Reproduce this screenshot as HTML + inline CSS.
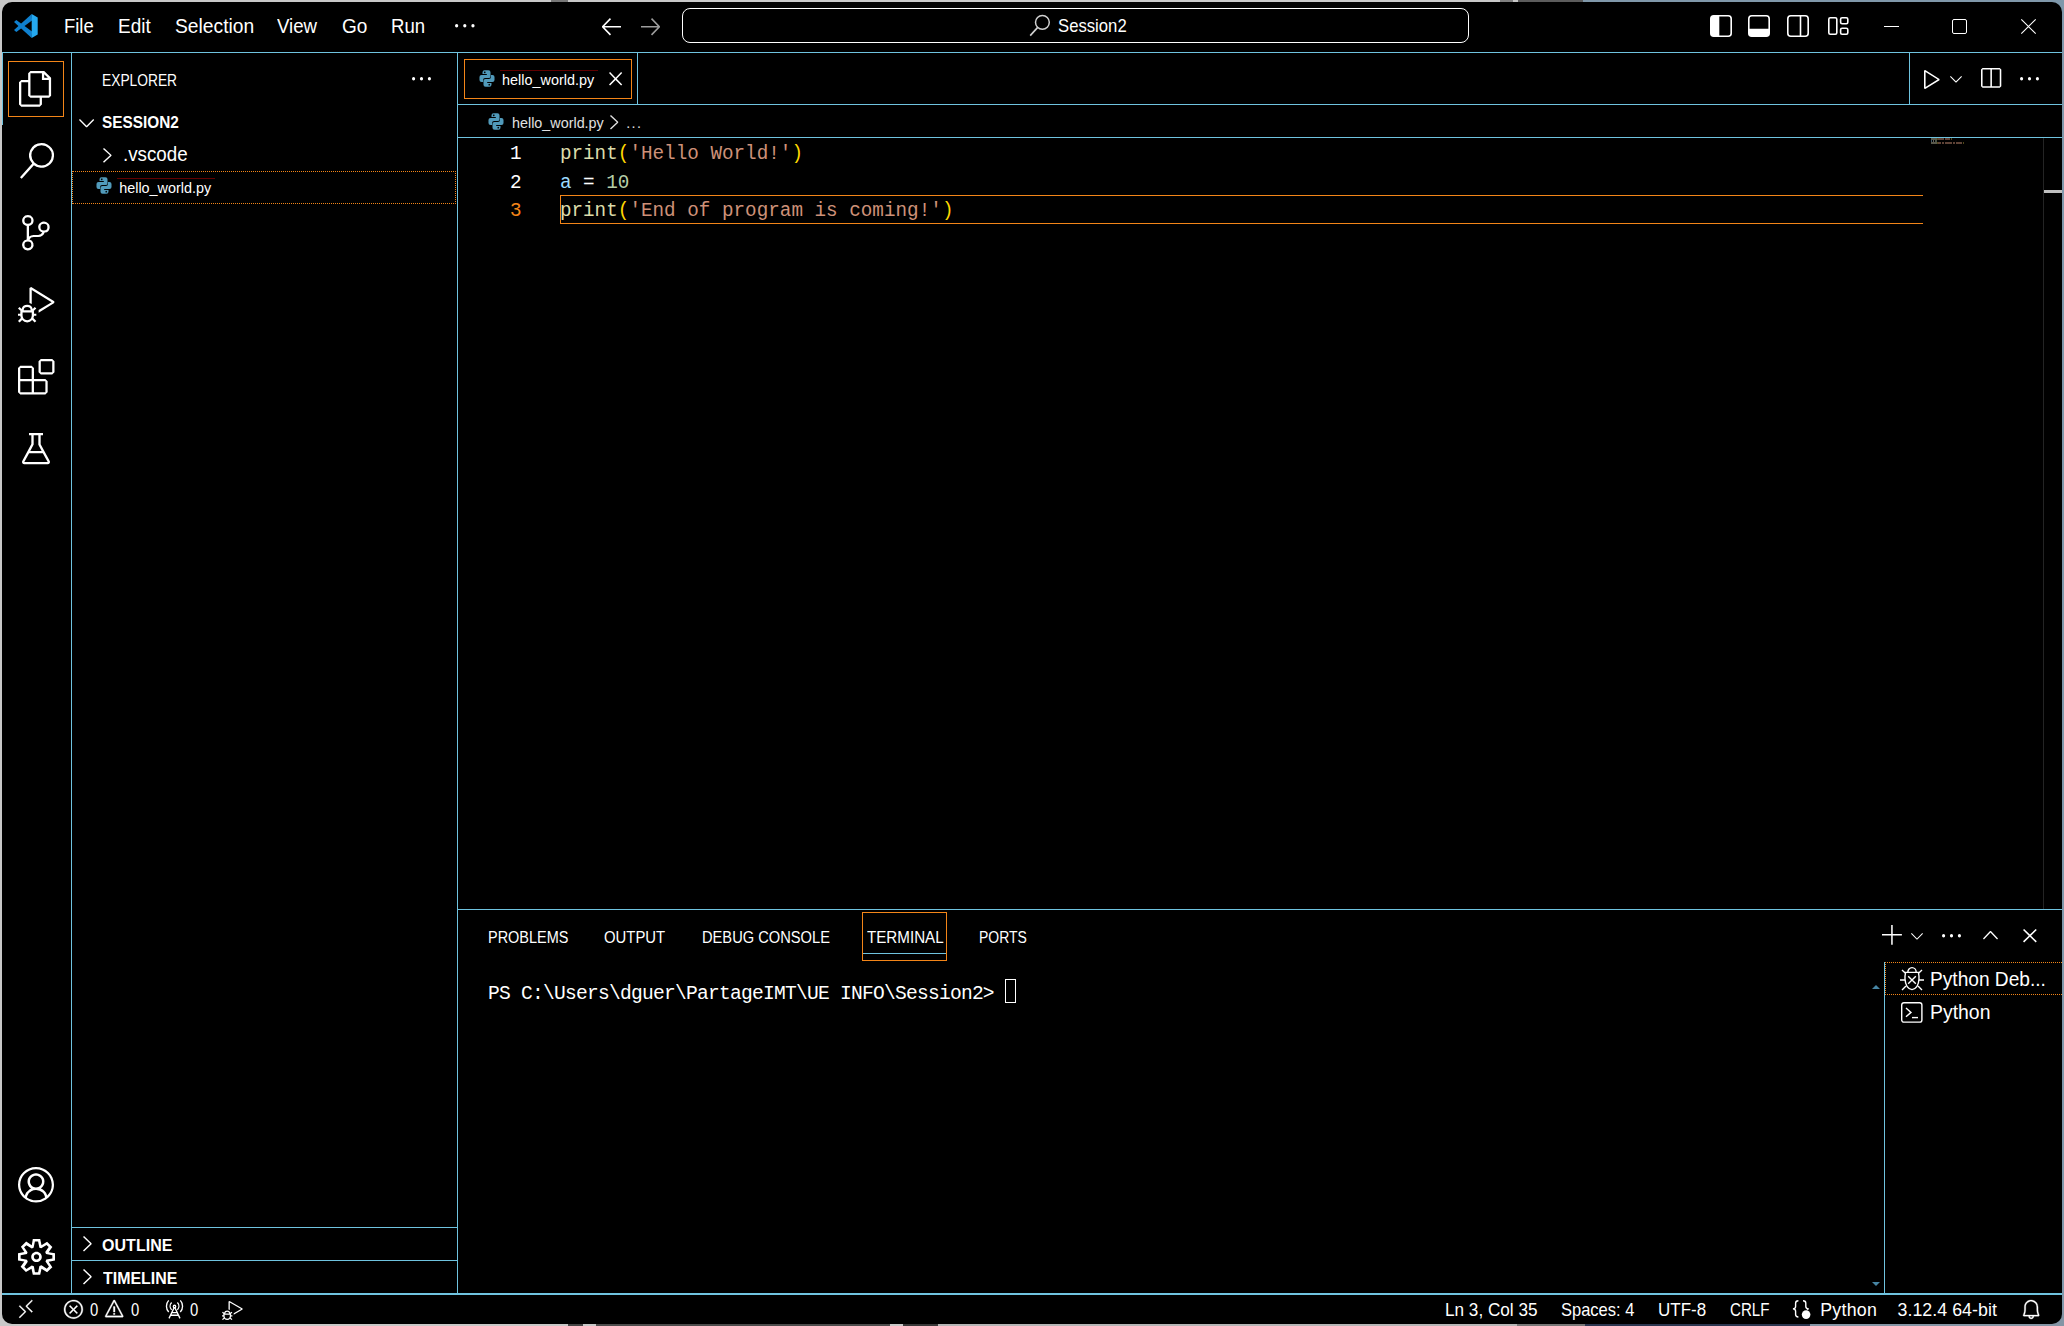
<!DOCTYPE html>
<html lang="en"><head><meta charset="utf-8"><title>hello_world.py - Session2 - Visual Studio Code</title>
<style>
html,body{margin:0;padding:0}
body{width:2064px;height:1326px;overflow:hidden;background:#c8c8c8;position:relative;font-family:"Liberation Sans",sans-serif;color:#fff}
#win{position:absolute;left:2px;top:2px;width:2060px;height:1321.5px;background:#000;border-radius:10px;overflow:hidden}
#root{position:absolute;left:0;top:0;width:2064px;height:1326px}
#root section{position:absolute;left:0;top:0;width:0;height:0}
#root div,#root svg,#root span,#desk div{position:absolute}
#root div{box-sizing:border-box}
.t{transform-origin:0 0;white-space:pre;height:40px;line-height:40px;font-family:"Liberation Sans",sans-serif;color:#fff}
.m{font-family:"Liberation Mono",monospace}
svg{overflow:visible;display:block}
</style></head>
<body>
<div id="desk">
<div style="left:1500px;top:0px;width:13px;height:14px;background:#808080"></div>
<div style="left:1518px;top:0px;width:65px;height:14px;background:#5c5c5c"></div>
<div style="left:1583px;top:0px;width:481px;height:14px;background:#8098aa"></div>
<div style="left:2050px;top:0px;width:14px;height:1326px;background:#7f98ab"></div>
<div style="left:551px;top:0px;width:17px;height:14px;background:#777"></div>
<div style="left:1517px;top:1310px;width:68px;height:16px;background:#777"></div>
<div style="left:1585px;top:1310px;width:225px;height:16px;background:#2b3650"></div>
<div style="left:568px;top:1310px;width:15px;height:16px;background:#444"></div>
<div style="left:596px;top:1310px;width:294px;height:16px;background:#4c4c4c"></div>
<div style="left:903px;top:1310px;width:35px;height:16px;background:#383838"></div>
<div style="left:938px;top:1310px;width:579px;height:16px;background:#b6b6b6"></div>
<div style="left:1810px;top:1310px;width:254px;height:16px;background:#8495a5"></div>
</div>
<div id="win"></div>
<div id="root">
<section id="titlebar">
<svg style="left:14px;top:14px" width="24" height="24" viewBox="0 0 24 24" ><path fill="#0f80cf" d="M17.7 0 L18 6.5 L2.3 18 L0 15.9 Z"/><path fill="#0f80cf" d="M17.7 24 L18 17.5 L2.3 6 L0 8.1 Z"/><path fill="#25a9f0" d="M17.7 0 L23.7 3.4 V20.6 L17.7 24 Z"/></svg>
<span class="t" style="left:64.39px;top:6px;font-size:19.6px;transform:scaleX(0.9415);">File</span>
<span class="t" style="left:117.54px;top:6px;font-size:19.6px;transform:scaleX(0.9681);">Edit</span>
<span class="t" style="left:174.63px;top:6px;font-size:19.6px;transform:scaleX(0.9826);">Selection</span>
<span class="t" style="left:277.32px;top:6px;font-size:19.6px;transform:scaleX(0.9518);">View</span>
<span class="t" style="left:341.74px;top:6px;font-size:19.6px;transform:scaleX(0.9697);">Go</span>
<span class="t" style="left:390.87px;top:6px;font-size:19.6px;transform:scaleX(0.9494);">Run</span>
<svg style="left:455px;top:24px" width="19.6" height="3.6" viewBox="2 7 12 2" preserveAspectRatio="none"><path fill="#fff" d="M4 8a1 1 0 1 1-2 0 1 1 0 0 1 2 0zm5 0a1 1 0 1 1-2 0 1 1 0 0 1 2 0zm5 0a1 1 0 1 1-2 0 1 1 0 0 1 2 0z"/></svg>
<svg style="left:602px;top:18px" width="19" height="17.5" viewBox="2 3.093 12 10.707" preserveAspectRatio="none"><path fill="#fff" d="M7 3.093l-5 5V8.800l5 5 .707-.707-4.146-4.147H14v-1H3.560L7.708 3.800 7 3.093z"/></svg>
<svg style="left:641px;top:18px" width="19" height="17.5" viewBox="2 3.18 12 10.707" preserveAspectRatio="none"><path fill="#9d9d9d" d="M9 13.887l5-5V8.180l-5-5-.707.707 4.146 4.147H2v1h10.440L8.292 13.180l.707.707z"/></svg>
<div style="left:682px;top:8px;width:787px;height:35px;border:1px solid #fff;border-radius:8px"></div>
<svg style="left:1029px;top:14px" width="22" height="23" viewBox="0 0 22 23" ><circle cx="13.4" cy="8.3" r="6.9" fill="none" stroke="#d0d0d0" stroke-width="1.5"/><path d="M8.7 13.4 L1.2 21.6" stroke="#d0d0d0" stroke-width="1.6" fill="none"/></svg>
<span class="t" style="left:1058.04px;top:6px;font-size:18.6px;transform:scaleX(0.8978);">Session2</span>
<svg style="left:1709.5px;top:15px" width="22" height="22" viewBox="0 0 22 22" ><rect x="0.8" y="0.8" width="20.4" height="20.4" rx="3" fill="none" stroke="#fff" stroke-width="1.6"/><path d="M0.8 3.8 a3 3 0 0 1 3-3 H9.3 V21.2 H3.8 a3 3 0 0 1 -3-3 Z" fill="#fff"/></svg>
<svg style="left:1748.4px;top:15px" width="22" height="22" viewBox="0 0 22 22" ><rect x="0.8" y="0.8" width="20.4" height="20.4" rx="3" fill="none" stroke="#fff" stroke-width="1.6"/><path d="M0.8 13.8 H21.2 V18.2 a3 3 0 0 1 -3 3 H3.8 a3 3 0 0 1 -3-3 Z" fill="#fff"/></svg>
<svg style="left:1787.4px;top:15px" width="22" height="22" viewBox="0 0 22 22" ><rect x="0.8" y="0.8" width="20.4" height="20.4" rx="3" fill="none" stroke="#fff" stroke-width="1.6"/><path d="M13.5 0.8 V21.2" stroke="#fff" stroke-width="1.6" fill="none"/></svg>
<svg style="left:1828px;top:17px" width="21" height="18" viewBox="0 0 21 18" ><g fill="none" stroke="#fff" stroke-width="1.6"><rect x="0.8" y="0.8" width="8" height="16.4" rx="1.5"/><rect x="12.6" y="0.8" width="7.2" height="6" rx="1.5"/><rect x="12.6" y="11.2" width="7.2" height="6" rx="1.5"/></g></svg>
<div style="left:1884px;top:26px;width:15px;height:1px;background:#fff"></div>
<div style="left:1952px;top:19px;width:15px;height:15px;border:1px solid #fff;border-radius:2px"></div>
<svg style="left:2021px;top:19px" width="15" height="15" viewBox="0 0 15 15" ><path d="M0.3 0.3 L14.7 14.7 M14.7 0.3 L0.3 14.7" stroke="#fff" stroke-width="1.1" fill="none"/></svg>
<div style="left:2px;top:52px;width:2060px;height:1px;background:#6fc3df"></div>
</section>
<section id="activitybar">
<div style="left:71px;top:53px;width:1px;height:1240px;background:#6fc3df"></div>
<div style="left:2px;top:52px;width:1px;height:73px;background:#6fc3df"></div>
<div style="left:8px;top:61px;width:56px;height:56px;border:1px solid #f38518"></div>
<svg style="left:19.2px;top:70.9px" width="32.1" height="35.7" viewBox="1 0 21 24" preserveAspectRatio="none"><path fill="#fff" d="M17.5 0h-9L7 1.5V6H2.5L1 7.5v15.07L2.5 24h12.07L16 22.57V18h4.7l1.3-1.43V4.5L17.5 0zm0 2.12l2.38 2.38H17.5V2.12zm-3 20.38h-12v-15H7v9.07L8.5 18h6v4.5zm6-6h-12v-15H16V6h4.500v10.5z"/></svg>
<svg style="left:19.5px;top:143px" width="34.1" height="35.8" viewBox="1 -1.02565e-06 22.5045 23.88" preserveAspectRatio="none"><path fill="#fff" d="M15.25 0a8.25 8.25 0 0 0-6.18 13.72L1 22.88l1.12 1 8.05-9.12A8.251 8.251 0 1 0 15.25.01V0zm0 15a6.75 6.75 0 1 1 0-13.5 6.75 6.75 0 0 1 0 13.5z"/></svg>
<svg style="left:22px;top:215px" width="27.7" height="35.5" viewBox="2.9925 0.001422 18.0145 24.0005" preserveAspectRatio="none"><path fill="#fff" d="M21.007 8.222A3.738 3.738 0 0 0 15.045 5.2a3.737 3.737 0 0 0 1.156 6.583 2.988 2.988 0 0 1-2.668 1.67h-2.99a4.456 4.456 0 0 0-2.989 1.165V7.4a3.737 3.737 0 1 0-1.494 0v9.117a3.776 3.776 0 1 0 1.816.099 2.990 2.990 0 0 1 2.668-1.667h2.990a4.484 4.484 0 0 0 4.223-3.039 3.736 3.736 0 0 0 3.250-3.687zM4.565 3.738a2.242 2.242 0 1 1 4.484 0 2.242 2.242 0 0 1-4.484 0zm4.484 16.441a2.242 2.242 0 1 1-4.484 0 2.242 2.242 0 0 1 4.484 0zm8.221-9.715a2.242 2.242 0 1 1 0-4.485 2.242 2.242 0 0 1 0 4.485z"/></svg>
<svg style="left:17.5px;top:287px" width="36.3" height="35.5" viewBox="0 0 23.76 24" preserveAspectRatio="none"><path fill="#fff" d="M10.94 13.5l-1.32 1.32a3.730 3.730 0 0 0-7.240 0L1.060 13.5 0 14.560l1.720 1.720-.220.220V18H0v1.500h1.500v.080c.077.489.214.966.410 1.420L0 22.940 1.060 24l1.650-1.650A4.308 4.308 0 0 0 6 24a4.310 4.310 0 0 0 3.290-1.650L10.940 24 12 22.940 10.090 21c.198-.464.336-.951.410-1.450v-.100H12V18h-1.500v-1.500l-.220-.220L12 14.560l-1.060-1.060zM6 13.500a2.250 2.250 0 0 1 2.250 2.250h-4.500A2.250 2.250 0 0 1 6 13.500zm3 6a3.330 3.330 0 0 1-3 3 3.330 3.330 0 0 1-3-3v-2.250h6v2.250zm14.760-9.900v1.260L13.500 17.370V15.600l8.500-5.370L9 2v9.460a5.070 5.070 0 0 0-1.500-.720V.630L8.640 0l15.120 9.600z"/></svg>
<svg style="left:17.5px;top:359px" width="36.5" height="35.5" viewBox="0 0 24 24" preserveAspectRatio="none"><path fill="#fff" d="M13.5 1.5L15 0h7.500L24 1.500V9l-1.500 1.500H15L13.500 9V1.500zm1.500 0V9h7.500V1.500H15zM0 15V6l1.500-1.500H9L10.500 6v7.500H18l1.500 1.500v7.500L18 24H1.500L0 22.500V15zm9-1.500V6H1.500v7.500H9zM9 15H1.500v7.500H9V15zm1.500 7.500H18V15h-7.500v7.500z"/></svg>
<svg style="left:22px;top:433.2px" width="28" height="31.3" viewBox="2.00153 1 11.9974 14.006" preserveAspectRatio="none"><path fill="#fff" d="M13.893 13.558L10 6.006v-4h1v-1H9.994V1l-.456.005H5V2h1v3.952l-3.894 7.609A1 1 0 0 0 3 15.006h10a1 1 0 0 0 .893-1.448zm-7-7.150L7 6.193V2.036l2-.024v4.237l.110.215 1.312 2.544H5.549l1.344-2.600zM3 14.017l2.039-3.994h5.900L13 14.006l-10 .011z"/></svg>
<svg style="left:18px;top:1167px" width="36" height="35.5" viewBox="0 0 16 16" preserveAspectRatio="none"><path fill="#fff" d="M16 7.992C16 3.580 12.416 0 8 0S0 3.580 0 7.992c0 2.430 1.104 4.620 2.832 6.090.016.016.032.016.032.032.144.112.288.224.448.336.080.048.144.111.224.175A7.980 7.980 0 0 0 8.016 16a7.980 7.980 0 0 0 4.480-1.375c.080-.048.144-.111.224-.160.144-.111.304-.223.448-.335.016-.016.032-.016.032-.032 1.696-1.487 2.800-3.676 2.800-6.106zm-8 7.001c-1.504 0-2.880-.480-4.016-1.279.016-.128.048-.255.080-.383a4.170 4.170 0 0 1 .416-.991c.176-.304.384-.576.640-.816.240-.240.528-.463.816-.639.304-.176.624-.304.976-.400A4.150 4.150 0 0 1 8 10.342a4.185 4.185 0 0 1 2.928 1.166c.368.368.656.800.864 1.295.112.288.192.592.240.911A7.030 7.030 0 0 1 8 14.993zm-2.448-7.400a2.490 2.490 0 0 1-.208-1.024c0-.351.064-.703.208-1.023.144-.320.336-.607.576-.847.240-.240.528-.431.848-.575.320-.144.672-.208 1.024-.208.368 0 .704.064 1.024.208.320.144.608.336.848.575.240.240.432.528.576.847.144.320.208.672.208 1.023 0 .368-.064.704-.208 1.023a2.840 2.840 0 0 1-.576.848 2.840 2.840 0 0 1-.848.575 2.715 2.715 0 0 1-2.064 0 2.840 2.840 0 0 1-.848-.575 2.526 2.526 0 0 1-.560-.848zm7.424 5.306c0-.032-.016-.048-.016-.080a5.220 5.220 0 0 0-.688-1.406 4.883 4.883 0 0 0-1.088-1.135 5.207 5.207 0 0 0-1.040-.608 2.820 2.820 0 0 0 .464-.383 4.200 4.200 0 0 0 .624-.784 3.624 3.624 0 0 0 .528-1.934 3.710 3.710 0 0 0-.288-1.470 3.799 3.799 0 0 0-.816-1.199 3.845 3.845 0 0 0-1.200-.800 3.720 3.720 0 0 0-1.472-.287 3.720 3.720 0 0 0-1.472.288 3.631 3.631 0 0 0-1.200.815 3.840 3.840 0 0 0-.800 1.199 3.710 3.710 0 0 0-.288 1.470c0 .352.048.688.144 1.007.096.336.224.640.400.927.160.288.384.544.624.784.144.144.304.271.480.383a5.120 5.120 0 0 0-1.040.624c-.416.320-.784.703-1.088 1.119a4.999 4.999 0 0 0-.688 1.406c-.016.032-.016.064-.016.080C1.776 11.636.992 9.910.992 7.992.992 4.140 4.144.991 8 .991s7.008 3.149 7.008 7.001a6.960 6.960 0 0 1-2.032 4.907z"/></svg>
<svg style="left:17.5px;top:1238.7px" width="37" height="35.8" viewBox="1 1 14 14" preserveAspectRatio="none"><path fill="#fff" fill-rule="evenodd" d="M9.100 4.400L8.600 2H7.400l-.500 2.400-.700.300-2-1.300-.900.800 1.300 2-.200.700-2.400.500v1.200l2.400.500.300.800-1.300 2 .800.800 2-1.300.800.300.400 2.300h1.200l.500-2.400.800-.300 2 1.300.800-.800-1.300-2 .300-.800 2.300-.400V7.400l-2.400-.500-.300-.800 1.300-2-.800-.800-2 1.300-.700-.200zM9.400 1l.500 2.400L12 2.100l2 2-1.400 2.100 2.400.400v2.800l-2.400.500L14 12l-2 2-2.100-1.400-.500 2.400H6.600l-.500-2.400L4 13.900l-2-2 1.400-2.100L1 9.400V6.600l2.400-.500L2.100 4l2-2 2.100 1.400.400-2.400h2.800zm.600 7c0 1.100-.900 2-2 2s-2-.900-2-2 .900-2 2-2 2 .900 2 2zM8 9c.600 0 1-.400 1-1s-.400-1-1-1-1 .400-1 1 .400 1 1 1z"/></svg>
</section>
<section id="sidebar">
<div style="left:457px;top:53px;width:1px;height:1240px;background:#6fc3df"></div>
<span class="t" style="left:102.37px;top:61px;font-size:15.8px;transform:scaleX(0.8724);">EXPLORER</span>
<svg style="left:412px;top:77.2px" width="19" height="3.6" viewBox="2 7 12 2" preserveAspectRatio="none"><path fill="#fff" d="M4 8a1 1 0 1 1-2 0 1 1 0 0 1 2 0zm5 0a1 1 0 1 1-2 0 1 1 0 0 1 2 0zm5 0a1 1 0 1 1-2 0 1 1 0 0 1 2 0z"/></svg>
<svg style="left:79.4px;top:118.8px" width="15.2" height="8.2" viewBox="3 5.715 9.953 5.285" preserveAspectRatio="none"><path fill="#fff" d="M7.976 10.072l4.357-4.357.62.618L8.284 11h-.618L3 6.333l.619-.618 4.357 4.357z"/></svg>
<span class="t" style="left:102.26px;top:103px;font-size:16px;transform:scaleX(0.9591);font-weight:700;">SESSION2</span>
<svg style="left:103.1px;top:147.9px" width="8.5" height="14.7" viewBox="5.715 3.047 5.285 9.953" preserveAspectRatio="none"><path fill="#fff" d="M10.072 8.024L5.715 3.667l.618-.62L11 7.716v.618L6.333 13l-.618-.619 4.357-4.357z"/></svg>
<span class="t" style="left:122.79px;top:134px;font-size:19.6px;transform:scaleX(0.9571);">.vscode</span>
<div style="left:72px;top:171px;width:384px;height:33px;border:1px dotted #f38518"></div>
<svg style="left:96.4px;top:177px" width="16" height="17" viewBox="0 0 16.4 17.2" preserveAspectRatio="none"><g fill="#519aba" fill-rule="evenodd"><path d="M3.6 4.05 V2.3 Q3.6 0.2 5.7 0.2 H9.7 Q11.8 0.2 11.8 2.3 V6.2 Q11.8 8.2 9.8 8.2 H6.2 Q4.2 8.2 4.2 10.2 V12.1 H2.6 Q0.5 12.1 0.5 10 V7.1 Q0.5 5 2.6 5 H8 V4.05 Z M5.9 1.5 a0.85 0.85 0 1 0 0.001 0 Z"/><path transform="rotate(180 8.2 8.6)" d="M3.6 4.05 V2.3 Q3.6 0.2 5.7 0.2 H9.7 Q11.8 0.2 11.8 2.3 V6.2 Q11.8 8.2 9.8 8.2 H6.2 Q4.2 8.2 4.2 10.2 V12.1 H2.6 Q0.5 12.1 0.5 10 V7.1 Q0.5 5 2.6 5 H8 V4.05 Z M5.9 1.5 a0.85 0.85 0 1 0 0.001 0 Z"/></g></svg>
<div style="left:117px;top:178px;width:98px;height:1px;background:#600000"></div>
<span class="t" style="left:119.20px;top:168px;font-size:14.4px;">hello_world.py</span>
<div style="left:72px;top:1227px;width:385px;height:1px;background:#6fc3df"></div>
<svg style="left:83px;top:1236.2px" width="8.6" height="15.6" viewBox="5.715 3.047 5.285 9.953" preserveAspectRatio="none"><path fill="#fff" d="M10.072 8.024L5.715 3.667l.618-.62L11 7.716v.618L6.333 13l-.618-.619 4.357-4.357z"/></svg>
<span class="t" style="left:102.04px;top:1226px;font-size:16px;letter-spacing:0.027px;font-weight:700;">OUTLINE</span>
<div style="left:72px;top:1260px;width:385px;height:1px;background:#6fc3df"></div>
<svg style="left:83px;top:1269.3px" width="8.6" height="15.5" viewBox="5.715 3.047 5.285 9.953" preserveAspectRatio="none"><path fill="#fff" d="M10.072 8.024L5.715 3.667l.618-.62L11 7.716v.618L6.333 13l-.618-.619 4.357-4.357z"/></svg>
<span class="t" style="left:103.02px;top:1259px;font-size:16px;transform:scaleX(0.9965);font-weight:700;">TIMELINE</span>
</section>
<section id="tabs">
<div style="left:464px;top:59px;width:168px;height:40px;border:1px solid #f38518"></div>
<svg style="left:478.8px;top:70px" width="16" height="17" viewBox="0 0 16.4 17.2" preserveAspectRatio="none"><g fill="#519aba" fill-rule="evenodd"><path d="M3.6 4.05 V2.3 Q3.6 0.2 5.7 0.2 H9.7 Q11.8 0.2 11.8 2.3 V6.2 Q11.8 8.2 9.8 8.2 H6.2 Q4.2 8.2 4.2 10.2 V12.1 H2.6 Q0.5 12.1 0.5 10 V7.1 Q0.5 5 2.6 5 H8 V4.05 Z M5.9 1.5 a0.85 0.85 0 1 0 0.001 0 Z"/><path transform="rotate(180 8.2 8.6)" d="M3.6 4.05 V2.3 Q3.6 0.2 5.7 0.2 H9.7 Q11.8 0.2 11.8 2.3 V6.2 Q11.8 8.2 9.8 8.2 H6.2 Q4.2 8.2 4.2 10.2 V12.1 H2.6 Q0.5 12.1 0.5 10 V7.1 Q0.5 5 2.6 5 H8 V4.05 Z M5.9 1.5 a0.85 0.85 0 1 0 0.001 0 Z"/></g></svg>
<div style="left:500px;top:70px;width:98px;height:1px;background:#600000"></div>
<span class="t" style="left:502.00px;top:60px;font-size:14.4px;letter-spacing:0.013px;">hello_world.py</span>
<svg style="left:609.2px;top:72.2px" width="13.2" height="13.6" viewBox="3.647 3.646 8.707 8.708" preserveAspectRatio="none"><path fill="#fff" d="M8 8.707l3.646 3.647.708-.707L8.707 8l3.647-3.646-.707-.708L8 7.293 4.354 3.646l-.707.708L7.293 8l-3.646 3.646.707.708L8 8.707z"/></svg>
<div style="left:637px;top:53px;width:1px;height:51px;background:#6fc3df"></div>
<div style="left:458px;top:104px;width:1604px;height:1px;background:#6fc3df"></div>
<div style="left:1909px;top:53px;width:1px;height:51px;background:#6fc3df"></div>
<svg style="left:1924.2px;top:69.9px" width="15.5" height="19.1" viewBox="3 2 9.78 12.83" preserveAspectRatio="none"><path fill="#fff" d="M3.780 2L3 2.410v12l.780.420 9-6V8l-9-6zM4 13.480V3.350l7.600 5.070L4 13.480z"/></svg>
<svg style="left:1950px;top:76.2px" width="12" height="6.4" viewBox="3 5.715 9.953 5.285" preserveAspectRatio="none"><path fill="#fff" d="M7.976 10.072l4.357-4.357.62.618L8.284 11h-.618L3 6.333l.619-.618 4.357 4.357z"/></svg>
<svg style="left:1981px;top:68.3px" width="20.3" height="19.7" viewBox="2 1 13 13" preserveAspectRatio="none"><path fill="#fff" d="M14 1H3L2 2v11l1 1h11l1-1V2l-1-1zM8 13H3V2h5v11zm6 0H9V2h5v11z"/></svg>
<svg style="left:2020px;top:77.2px" width="19" height="3.6" viewBox="2 7 12 2" preserveAspectRatio="none"><path fill="#fff" d="M4 8a1 1 0 1 1-2 0 1 1 0 0 1 2 0zm5 0a1 1 0 1 1-2 0 1 1 0 0 1 2 0zm5 0a1 1 0 1 1-2 0 1 1 0 0 1 2 0z"/></svg>
<svg style="left:488px;top:113px" width="16" height="17" viewBox="0 0 16.4 17.2" preserveAspectRatio="none"><g fill="#519aba" fill-rule="evenodd"><path d="M3.6 4.05 V2.3 Q3.6 0.2 5.7 0.2 H9.7 Q11.8 0.2 11.8 2.3 V6.2 Q11.8 8.2 9.8 8.2 H6.2 Q4.2 8.2 4.2 10.2 V12.1 H2.6 Q0.5 12.1 0.5 10 V7.1 Q0.5 5 2.6 5 H8 V4.05 Z M5.9 1.5 a0.85 0.85 0 1 0 0.001 0 Z"/><path transform="rotate(180 8.2 8.6)" d="M3.6 4.05 V2.3 Q3.6 0.2 5.7 0.2 H9.7 Q11.8 0.2 11.8 2.3 V6.2 Q11.8 8.2 9.8 8.2 H6.2 Q4.2 8.2 4.2 10.2 V12.1 H2.6 Q0.5 12.1 0.5 10 V7.1 Q0.5 5 2.6 5 H8 V4.05 Z M5.9 1.5 a0.85 0.85 0 1 0 0.001 0 Z"/></g></svg>
<span class="t" style="left:512.10px;top:103px;font-size:14.4px;transform:scaleX(0.9975);color:#e0e0e0;">hello_world.py</span>
<svg style="left:610.4px;top:114.6px" width="8.2" height="14.4" viewBox="5.715 3.047 5.285 9.953" preserveAspectRatio="none"><path fill="#e0e0e0" d="M10.072 8.024L5.715 3.667l.618-.62L11 7.716v.618L6.333 13l-.618-.619 4.357-4.357z"/></svg>
<span class="t" style="left:626.19px;top:103px;font-size:14.4px;letter-spacing:1.364px;color:#e0e0e0;">...</span>
<div style="left:458px;top:137px;width:1604px;height:1px;background:#6fc3df"></div>
</section>
<section id="editor">
<span class="t m" style="left:509.91px;top:134px;font-size:19.3px;">1</span>
<span class="t m" style="left:509.94px;top:163px;font-size:19.3px;">2</span>
<span class="t m" style="left:510.09px;top:191px;font-size:19.3px;color:#f38518;">3</span>
<span class="t m" style="left:559.91px;top:134px;font-size:19.3px;color:#dcdcaa;">print</span><span class="t m" style="left:617.82px;top:134px;font-size:19.3px;color:#ffd700;">(</span><span class="t m" style="left:629.40px;top:134px;font-size:19.3px;color:#ce9178;">'Hello World!'</span><span class="t m" style="left:791.55px;top:134px;font-size:19.3px;color:#ffd700;">)</span>
<span class="t m" style="left:559.91px;top:163px;font-size:19.3px;color:#9cdcfe;">a</span><span class="t m" style="left:571.50px;top:163px;font-size:19.3px;"> = </span><span class="t m" style="left:606.24px;top:163px;font-size:19.3px;color:#b5cea8;">10</span>
<div style="left:560px;top:195px;width:1363px;height:29px;border:1px solid #f38518;border-right:none"></div>
<span class="t m" style="left:559.91px;top:191px;font-size:19.3px;color:#dcdcaa;">print</span><span class="t m" style="left:617.82px;top:191px;font-size:19.3px;color:#ffd700;">(</span><span class="t m" style="left:629.40px;top:191px;font-size:19.3px;color:#ce9178;">'End of program is coming!'</span><span class="t m" style="left:942.12px;top:191px;font-size:19.3px;color:#ffd700;">)</span>
<div style="left:1931px;top:138px;width:6px;height:2px;background:#58584a"></div><div style="left:1937px;top:138px;width:1px;height:2px;background:#504818"></div><div style="left:1938px;top:138px;width:6px;height:2px;background:#5e4236"></div><div style="left:1945px;top:138px;width:5px;height:2px;background:#5e4236"></div><div style="left:1951px;top:138px;width:1px;height:2px;background:#504818"></div>
<div style="left:1931px;top:140px;width:1px;height:2px;background:#3e5868"></div><div style="left:1933px;top:140px;width:1px;height:2px;background:#606060"></div><div style="left:1935px;top:140px;width:2px;height:2px;background:#485244"></div>
<div style="left:1931px;top:142px;width:6px;height:2px;background:#58584a"></div><div style="left:1937px;top:142px;width:1px;height:2px;background:#504818"></div><div style="left:1938px;top:142px;width:3px;height:2px;background:#5e4236"></div><div style="left:1942px;top:142px;width:2px;height:2px;background:#5e4236"></div><div style="left:1945px;top:142px;width:7px;height:2px;background:#5e4236"></div><div style="left:1953px;top:142px;width:2px;height:2px;background:#5e4236"></div><div style="left:1956px;top:142px;width:6px;height:2px;background:#5e4236"></div><div style="left:1963px;top:142px;width:1px;height:2px;background:#504818"></div>
<div style="left:2043px;top:138px;width:1px;height:771px;background:#242424"></div>
<div style="left:2044px;top:190px;width:18px;height:3px;background:#c0c0c0"></div>
</section>
<section id="panel">
<div style="left:458px;top:909px;width:1604px;height:1px;background:#6fc3df"></div>
<span class="t" style="left:487.81px;top:918px;font-size:15.8px;transform:scaleX(0.9163);">PROBLEMS</span>
<span class="t" style="left:604.30px;top:918px;font-size:15.8px;transform:scaleX(0.9414);">OUTPUT</span>
<span class="t" style="left:702.20px;top:918px;font-size:15.8px;transform:scaleX(0.9281);">DEBUG CONSOLE</span>
<div style="left:862px;top:912px;width:85px;height:49px;border:1px solid #f38518"></div>
<span class="t" style="left:867.16px;top:918px;font-size:15.8px;transform:scaleX(0.9594);">TERMINAL</span>
<div style="left:863px;top:953px;width:83px;height:1px;background:#6fc3df"></div>
<span class="t" style="left:978.75px;top:918px;font-size:15.8px;transform:scaleX(0.8835);">PORTS</span>
<svg style="left:1881.9px;top:925px" width="19.9" height="19.7" viewBox="1 1 13 13" preserveAspectRatio="none"><path fill="#fff" d="M14 7v1H8v6H7V8H1V7h6V1h1v6h6z"/></svg>
<svg style="left:1911px;top:933px" width="12" height="6.6" viewBox="3 5.715 9.953 5.285" preserveAspectRatio="none"><path fill="#fff" d="M7.976 10.072l4.357-4.357.62.618L8.284 11h-.618L3 6.333l.619-.618 4.357 4.357z"/></svg>
<svg style="left:1942px;top:934.2px" width="19" height="3.6" viewBox="2 7 12 2" preserveAspectRatio="none"><path fill="#fff" d="M4 8a1 1 0 1 1-2 0 1 1 0 0 1 2 0zm5 0a1 1 0 1 1-2 0 1 1 0 0 1 2 0zm5 0a1 1 0 1 1-2 0 1 1 0 0 1 2 0z"/></svg>
<svg style="left:1983px;top:931.2px" width="15" height="8.6" viewBox="3.047 5 9.953 5.285" preserveAspectRatio="none"><path fill="#fff" d="M8.024 5.928l-4.357 4.357-.62-.618L7.716 5h.618L13 9.667l-.619.618-4.357-4.357z"/></svg>
<svg style="left:2022.7px;top:929.2px" width="13.8" height="13.4" viewBox="3.647 3.646 8.707 8.708" preserveAspectRatio="none"><path fill="#fff" d="M8 8.707l3.646 3.647.708-.707L8.707 8l3.647-3.646-.707-.708L8 7.293 4.354 3.646l-.707.708L7.293 8l-3.646 3.646.707.708L8 8.707z"/></svg>
<span class="t m" style="left:488.05px;top:974px;font-size:19.6px;letter-spacing:-0.762px;">PS C:\Users\dguer\PartageIMT\UE INFO\Session2&gt;</span>
<div style="left:1005px;top:979px;width:11px;height:24px;border:1px solid #fff"></div>
<div style="left:1884px;top:962px;width:1px;height:331px;background:#6fc3df"></div>
<div style="left:1885px;top:962px;width:177px;height:33px;border:1px dotted #f38518;border-right:none"></div>
<svg style="left:1900px;top:967px" width="24" height="23.5" viewBox="0 0 24 23.5" ><g fill="none" stroke="#fff" stroke-width="1.4"><path d="M7.8 5.4 A4.2 4.8 0 0 1 16.2 5.4"/><path d="M5.6 5.4 H18.4 Q19.2 9 19 12 Q18.4 21.5 12 22.6 Q5.6 21.5 5 12 Q4.8 9 5.6 5.4 Z"/><path d="M0 13 H5 M19 13 H24"/><path d="M2 3 L5.2 6 M22 3 L18.8 6 M2 23 L6 19 M22 23 L18 19"/><path d="M8.2 9.2 L15.8 16.8 M15.8 9.2 L8.2 16.8"/></g></svg>
<span class="t" style="left:1929.63px;top:959px;font-size:19.6px;transform:scaleX(0.9761);">Python Deb...</span>
<svg style="left:1901px;top:1001.5px" width="21.6" height="20.8" viewBox="0 0 21.6 20.8" ><g fill="none" stroke="#fff" stroke-width="1.4"><rect x="0.7" y="0.7" width="20.2" height="19.4" rx="2.2"/><path d="M5 6 L10 10.4 L5 14.8"/><path d="M11 15.6 H17"/></g></svg>
<span class="t" style="left:1929.61px;top:992px;font-size:19.6px;transform:scaleX(0.9907);">Python</span>
<svg style="left:1872px;top:985px" width="8" height="4" viewBox="0 0 8 4" ><path d="M0 4 L4 0 L8 4 Z" fill="#4785a4"/></svg>
<svg style="left:1872px;top:1282px" width="8" height="4" viewBox="0 0 8 4" ><path d="M0 0 L4 4 L8 0 Z" fill="#4785a4"/></svg>
</section>
<section id="statusbar">
<div style="left:2px;top:1293px;width:2060px;height:2px;background:#6fc3df"></div>
<svg style="left:18.9px;top:1299.8px" width="13.6" height="18" viewBox="3 1 9.905 13.362" preserveAspectRatio="none"><path fill="#fff" stroke="#fff" stroke-width="0.25" stroke-linejoin="round" d="M12.904 9.570L8.928 5.596l3.976-3.976-.619-.620L8 5.286v.619l4.285 4.285.620-.618zM3 5.620l4.072 4.050L3 13.743l.619.619L8 9.981v-.619L3.619 5 3 5.620z"/></svg>
<svg style="left:64.2px;top:1300px" width="18.9" height="18.7" viewBox="0.979861 0.985 13.8201 14.0474" preserveAspectRatio="none"><path fill="#fff" stroke="#fff" stroke-width="0.25" stroke-linejoin="round" d="M8.600 1c1.600.100 3.100.900 4.200 2 1.300 1.400 2 3.100 2 5.100 0 1.600-.600 3.100-1.600 4.400-1 1.200-2.400 2.100-4 2.400-1.600.300-3.200.100-4.600-.700-1.400-.800-2.500-2-3.100-3.500C.900 9.200.800 7.500 1.300 6c.500-1.600 1.400-2.900 2.800-3.800C5.400 1.300 7 .900 8.600 1zm.500 12.900c1.300-.300 2.500-1 3.400-2.100.800-1.100 1.300-2.400 1.200-3.800 0-1.600-.600-3.200-1.700-4.300-1-1-2.200-1.600-3.600-1.700-1.300-.100-2.700.200-3.800 1-1.100.800-1.900 1.900-2.300 3.300-.400 1.300-.400 2.700.200 4 .600 1.300 1.500 2.300 2.700 3 1.200.700 2.600.900 3.900.600zM7.900 7.500L10.300 5l.700.700-2.400 2.500 2.400 2.500-.700.700-2.400-2.500-2.400 2.500-.700-.700 2.400-2.500-2.400-2.500.700-.700 2.400 2.500z"/></svg>
<span class="t" style="left:90.02px;top:1290px;font-size:17.8px;transform:scaleX(0.8344);">0</span>
<svg style="left:105px;top:1300.2px" width="18.4" height="17.2" viewBox="1 1 13.98 13" preserveAspectRatio="none"><path fill="#fff" stroke="#fff" stroke-width="0.25" stroke-linejoin="round" d="M7.560 1h.880l6.540 12.260-.440.740H1.440L1 13.260 7.560 1zM8 2.280L2.280 13H13.700L8 2.280zM8.625 12v-1h-1.250v1h1.250zm-1.250-2V6h1.250v4h-1.250z"/></svg>
<span class="t" style="left:130.52px;top:1290px;font-size:17.8px;transform:scaleX(0.8344);">0</span>
<svg style="left:166px;top:1300px" width="18" height="19" viewBox="0 0 18 19" ><g fill="none" stroke="#fff" stroke-width="1.35"><circle cx="8.5" cy="6.4" r="1.2"/><path d="M8.1 7.8 L3 18.4 M8.9 7.8 L14 18.4 M5.9 12.6 H11.1 M4.6 15.2 H12.4"/><path d="M5.6 2.5 A5.4 5.4 0 0 0 5.6 9.9 M11.4 2.5 A5.4 5.4 0 0 1 11.4 9.9"/><path d="M2.7 0.4 A8.6 8.6 0 0 0 2.7 12 M14.3 0.4 A8.6 8.6 0 0 1 14.3 12"/></g></svg>
<span class="t" style="left:190.12px;top:1290px;font-size:17.8px;transform:scaleX(0.8344);">0</span>
<svg style="left:222.4px;top:1301.3px" width="20.6" height="19" viewBox="0 0 23.76 24" preserveAspectRatio="none"><path fill="#fff" d="M10.94 13.5l-1.32 1.32a3.730 3.730 0 0 0-7.240 0L1.060 13.5 0 14.560l1.720 1.720-.220.220V18H0v1.500h1.500v.080c.077.489.214.966.410 1.420L0 22.940 1.060 24l1.650-1.650A4.308 4.308 0 0 0 6 24a4.310 4.310 0 0 0 3.290-1.650L10.940 24 12 22.940 10.090 21c.198-.464.336-.951.410-1.450v-.100H12V18h-1.500v-1.500l-.220-.220L12 14.560l-1.060-1.060zM6 13.500a2.250 2.250 0 0 1 2.250 2.250h-4.500A2.250 2.250 0 0 1 6 13.500zm3 6a3.330 3.330 0 0 1-3 3 3.330 3.330 0 0 1-3-3v-2.250h6v2.250zm14.760-9.900v1.260L13.500 17.370V15.600l8.500-5.370L9 2v9.460a5.070 5.070 0 0 0-1.500-.720V.630L8.640 0l15.120 9.600z"/></svg>
<span class="t" style="left:1445.29px;top:1290px;font-size:17.8px;transform:scaleX(0.9650);">Ln 3, Col 35</span>
<span class="t" style="left:1561.45px;top:1290px;font-size:17.8px;transform:scaleX(0.9276);">Spaces: 4</span>
<span class="t" style="left:1658.39px;top:1290px;font-size:17.8px;transform:scaleX(0.9548);">UTF-8</span>
<span class="t" style="left:1730.43px;top:1290px;font-size:17.8px;transform:scaleX(0.8492);">CRLF</span>
<svg style="left:1792.2px;top:1300.4px" width="19" height="19" viewBox="0 0 19 19" ><g fill="none" stroke="#fff" stroke-width="1.4"><path d="M6.4 0.8 Q3.6 0.8 3.6 3.2 V6.6 Q3.6 8.9 0.9 8.9 Q3.6 8.9 3.6 11.2 V14.6 Q3.6 17 6.4 17"/><path d="M11 0.8 Q13.8 0.8 13.8 3.2 V6.6 Q13.8 8.9 16.8 8.9 Q15.6 8.9 14.9 9.6"/></g><circle cx="14.1" cy="14.6" r="4.3" fill="#fff"/></svg>
<span class="t" style="left:1820.24px;top:1290px;font-size:17.8px;letter-spacing:0.260px;">Python</span>
<span class="t" style="left:1897.52px;top:1290px;font-size:17.8px;letter-spacing:0.037px;">3.12.4 64-bit</span>
<svg style="left:2023.2px;top:1300px" width="16.4" height="19" viewBox="2 1.00017 11.963 13.9988" preserveAspectRatio="none"><path fill="#fff" stroke="#fff" stroke-width="0.2" stroke-linejoin="round" d="M13.377 10.573a7.630 7.630 0 0 1-.383-2.380V6.195a5.115 5.115 0 0 0-1.268-3.446 5.138 5.138 0 0 0-3.242-1.722c-.694-.072-1.400 0-2.070.227-.670.215-1.280.574-1.794 1.053a4.923 4.923 0 0 0-1.208 1.675 5.067 5.067 0 0 0-.431 2.022v2.200a7.610 7.610 0 0 1-.383 2.370L2 12.343l.479.658h3.505c0 .526.215 1.040.586 1.412.370.370.885.586 1.412.586.526 0 1.040-.215 1.411-.586s.587-.886.587-1.412h3.505l.478-.658-.586-1.770zm-4.690 3.147a.997.997 0 0 1-.705.299.997.997 0 0 1-.706-.300.997.997 0 0 1-.300-.705h1.999a.939.939 0 0 1-.287.706zm-5.515-1.710l.371-1.114a8.633 8.633 0 0 0 .443-2.691V6.004c0-.563.120-1.113.347-1.616.227-.514.550-.969.969-1.340.419-.382.910-.670 1.436-.837.538-.180 1.100-.240 1.650-.180a4.147 4.147 0 0 1 2.597 1.400 4.133 4.133 0 0 1 1.004 2.776v2.010c0 .909.144 1.818.443 2.691l.371 1.113h-9.630v-.012z"/></svg>
</section>
</div>
</body></html>
